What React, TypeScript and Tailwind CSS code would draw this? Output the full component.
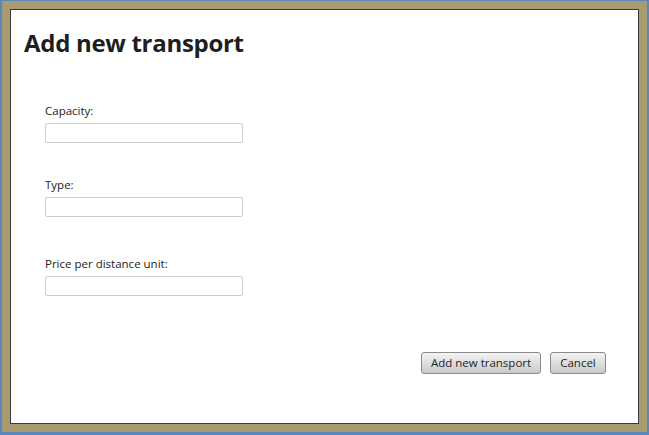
import React from 'react';

const fields = [
  { id: 'capacity', label: 'Capacity:', gap: 'mt-[43px]' },
  { id: 'type', label: 'Type:', gap: 'mt-[34px]' },
  { id: 'price', label: 'Price per distance unit:', gap: 'mt-[39px]' },
];

const App: React.FC = () => {
  return (
    <div
      className="w-[649px] h-[435px] bg-[#5a86bb] pl-[2px] pr-[2px] pt-[1px] pb-[3px]"
      style={{ fontFamily: '"Open Sans", "Noto Sans", sans-serif' }}
    >
      <div className="h-full bg-[#a89b6f] p-[8px]">
        <div className="h-full bg-white border border-[#3b3b3b] flex flex-col pl-[13px] pr-[31px] pt-[16px]">
          <h1 className="text-[24px] leading-[34px] font-bold text-[#1e1e1e] tracking-[-0.3px]">Add new transport</h1>

          <div className="flex flex-col pl-[21px]">
            {fields.map(f => (
              <div key={f.id} className={`flex flex-col ${f.gap}`}>
                <label className="text-[11.5px] leading-[16px] text-[#222] mb-[4px]">{f.label}</label>
                <input
                  type="text"
                  className="w-[198px] h-[20px] border border-[#cfcfcf] rounded-[2px] bg-white outline-none"
                />
              </div>
            ))}
          </div>

          <div className="flex justify-end gap-[9px] mt-[56px] pr-[1px]">
            <button className="h-[22px] w-[120px] text-[11.5px] text-[#1e1e1e] rounded-[3px] border border-[#8a8a8a] bg-gradient-to-b from-[#f4f4f4] to-[#c9c9c9]">
              Add new transport
            </button>
            <button className="h-[22px] w-[56px] text-[11.5px] text-[#1e1e1e] rounded-[3px] border border-[#8a8a8a] bg-gradient-to-b from-[#f4f4f4] to-[#c9c9c9]">
              Cancel
            </button>
          </div>
        </div>
      </div>
    </div>
  );
};

export default App;
